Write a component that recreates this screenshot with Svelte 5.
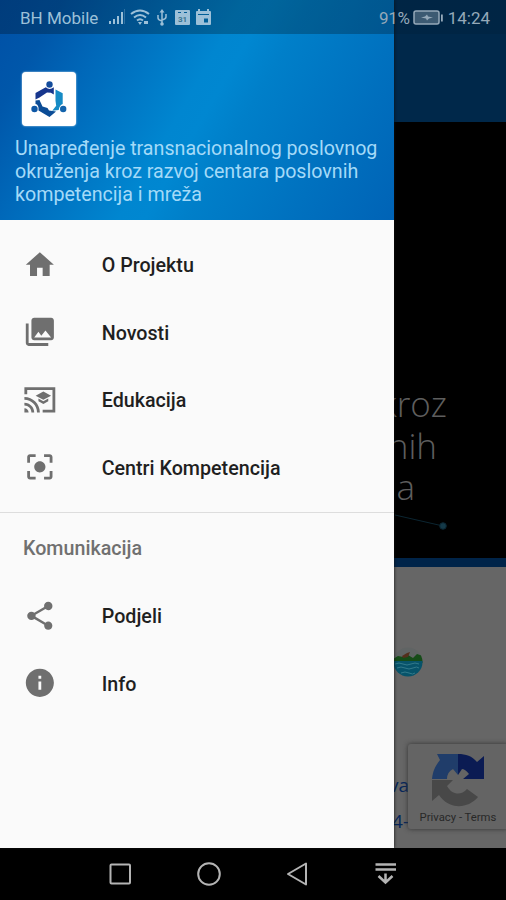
<script lang="ts">
  type Item = { label: string; icon: string };

  const home = 'M10 20v-6h4v6h5v-8h3L12 3 2 12h3v8z';
  const library =
    'M22 16V4c0-1.1-.9-2-2-2H8c-1.1 0-2 .9-2 2v12c0 1.1.9 2 2 2h12c1.1 0 2-.9 2-2zm-11-4l2.03 2.71L16 11l4 5H8l3-4zM2 6v14c0 1.1.9 2 2 2h14v-2H4V6H2z';
  const education =
    'M23 3H1v5h2V5h18v14h-7v2h9V3zM1 18v3h3c0-1.66-1.34-3-3-3zm0-4v2c2.76 0 5 2.24 5 5h2c0-3.87-3.13-7-7-7zm0-4v2c4.97 0 9 4.03 9 9h2c0-6.08-4.93-11-11-11zm10 1.09v2L14.5 15l3.5-1.91v-2L14.5 13 11 11.09zM14.5 6 9 9l5.5 3L20 9l-5.5-3z';
  const focus =
    'M12 8c-2.21 0-4 1.79-4 4s1.79 4 4 4 4-1.79 4-4-1.79-4-4-4zm-7 7H3v4c0 1.1.9 2 2 2h4v-2H5v-4zM5 5h4V3H5c-1.1 0-2 .9-2 2v4h2V5zm14-2h-4v2h4v4h2V5c0-1.1-.9-2-2-2zm0 16h-4v2h4c1.1 0 2-.9 2-2v-4h-2v4z';
  const share =
    'M18 16.08c-.76 0-1.44.3-1.96.77L8.91 12.7c.05-.23.09-.46.09-.7s-.04-.47-.09-.7l7.05-4.11c.54.5 1.25.81 2.04.81 1.66 0 3-1.34 3-3s-1.34-3-3-3-3 1.34-3 3c0 .24.04.47.09.7L8.04 9.81C7.5 9.31 6.79 9 6 9c-1.66 0-3 1.34-3 3s1.34 3 3 3c.79 0 1.5-.31 2.04-.81l7.12 4.16c-.05.21-.08.43-.08.65 0 1.61 1.31 2.92 2.92 2.92s2.92-1.31 2.92-2.92-1.31-2.92-2.92-2.92z';
  const info =
    'M12 2C6.48 2 2 6.48 2 12s4.48 10 10 10 10-4.48 10-10S17.52 2 12 2zm1 15h-2v-6h2v6zm0-8h-2V7h2v2z';

  const main: Item[] = [
    { label: 'O Projektu', icon: home },
    { label: 'Novosti', icon: library },
    { label: 'Edukacija', icon: education },
    { label: 'Centri Kompetencija', icon: focus }
  ];
  const communication: Item[] = [
    { label: 'Podjeli', icon: share },
    { label: 'Info', icon: info }
  ];
</script>

{#snippet row(item: Item)}
  <li>
    <svg class="icon" viewBox="0 0 24 24"><path d={item.icon} /></svg>
    <span>{item.label}</span>
  </li>
{/snippet}

<div class="phone">
  <div class="page">
    <div class="appbar"></div>
    <div class="hero">
      <p class="l1">kroz</p>
      <p class="l2">nih</p>
      <p class="l3">a</p>
      <svg class="spark" viewBox="0 0 60 24">
        <path d="M0 5 L48 16" />
        <circle cx="48" cy="16" r="3.3" />
      </svg>
    </div>
    <div class="content">
      <svg class="crest" viewBox="0 0 30 30">
        <clipPath id="crest"><circle cx="15" cy="15" r="14.5" /></clipPath>
        <g clip-path="url(#crest)">
          <rect width="30" height="30" fill="#606464" />
          <path d="M0 15V12l5-3 5 1 5-2 5 3 4-4 6 2v7z" fill="#164c18" />
          <path d="M9 9l5-3 3-1-2 5-5 1z" fill="#542f1c" />
          <rect y="14" width="30" height="16" fill="#07536a" />
          <path d="M2 17q4-2 8 0t8 0 8 0M4 21q4-2 8 0t8 0 6 0M8 26q4-2 8 0t6 0" stroke="#337a8b" fill="none" />
        </g>
      </svg>
      <span class="link va">va</span>
      <span class="link four">4-</span>
      <div class="captcha">
        <svg viewBox="0 0 54 54">
          <path d="M1 26C2 17 5 12 9 7L6 1h21v21l-5-6q-6 3-6 10z" fill="#203d6a" />
          <path d="M27 1c8 0 14 2 19 8l7-6v23H32l6-5q-4-5-7-5l-4 6z" fill="#0b1b53" />
          <path d="M1 27h21l-6 6c5 9 14 10 20 3l11 8C36 57 17 56 8 42l-7 6z" fill="#484848" />
        </svg>
        <span>Privacy - Terms</span>
      </div>
    </div>
  </div>

  <aside class="drawer">
    <header>
      <div class="logo">
        <svg viewBox="0 0 54 54">
          <circle cx="27.5" cy="12.5" r="3.2" fill="#144c9c" />
          <circle cx="12.5" cy="37" r="3.2" fill="#0e58a6" />
          <circle cx="41.2" cy="37" r="3.2" fill="#1263ac" />
          <path d="M13.500 21l10.300-5.800q3.700 3.600 8 0V22.500l-3-1.700-3.800-.3-7.500 5-4 2z" fill="#17368d" />
          <path d="M33.500 17.500l7.200 3.800V32q-3.200.8-4 6l-6.500.8 4-5-.7-5z" fill="#168bc5" />
          <path d="M13.500 28.500l4-.5 3 6.500 5 1.500 1.500 2.500 7 1-6.500 5.500-11-6.500q.5-6-3-6.500z" fill="#0b4c96" />
        </svg>
      </div>
      <p>Unapređenje transnacionalnog poslovnog okruženja kroz razvoj centara poslovnih kompetencija i mreža</p>
    </header>
    <ul class="main">
      {#each main as item (item.label)}
        {@render row(item)}
      {/each}
    </ul>
    <h2>Komunikacija</h2>
    <ul>
      {#each communication as item (item.label)}
        {@render row(item)}
      {/each}
    </ul>
  </aside>

  <div class="status">
    <span class="carrier">BH Mobile</span>
    <svg class="signals" viewBox="0 0 106 20">
      <path d="M0 13h2v3H0zM4 11h2v5H4zM8 8h2v8H8zM12 4h2v12h-2z" />
      <path d="M15 1h1v15h-1z" opacity=".3" />
      <g fill="none" stroke="currentColor" stroke-width="2">
        <path d="M22 6q9-7 18 0M25 9.500q6-5 12 0M28 12.500q3-2.500 6 0" />
        <path d="M53 3v13M49 7v3q0 2 4 3M57 6v3q0 2-4 3" stroke-width="1.5" />
      </g>
      <path d="M29 14h4l-2 3zM35 13h4v3h-4zM50.500 4.500L53 1l2.500 3.500z" />
      <circle cx="53" cy="16" r="1.8" />
      <path fill-rule="evenodd" d="M67 2h13q1 0 1 1v13q0 1-1 1H67q-1 0-1-1V3q0-1 1-1zM69 4h3v1h-3zM75 4h3v1h-3z" />
      <text x="69" y="13.500">31</text>
      <path fill-rule="evenodd" d="M88 3h1V1h2v2h7V1h2v2h1q1 0 1 1v12q0 1-1 1H88q-1 0-1-1V4q0-1 1-1zM89 6v1h11V6zM95 10.500v4h4v-4z" />
    </svg>
    <span class="percent">91%</span>
    <svg class="battery" viewBox="0 0 31 16">
      <rect x="1" y="1" width="25" height="13" rx="2" fill="currentColor" fill-opacity=".4" stroke="currentColor" stroke-width="1.5" />
      <path d="M28 4.500h1.800v7H28zM8 7.500l4-1 2-2 1 2 5 1-4 1-2 2-1-2z" />
    </svg>
    <span class="time">14:24</span>
  </div>

  <nav>
    <svg viewBox="0 0 28 28"><rect x="4.500" y="4.500" width="19.500" height="19" rx="1" /></svg>
    <svg viewBox="0 0 28 28"><circle cx="14" cy="14" r="10.800" /></svg>
    <svg viewBox="0 0 28 28"><path d="M23 3.500v21L5 14z" stroke-linejoin="round" /></svg>
    <svg viewBox="0 0 28 28"><path d="M3.500 4.500h20.500M3.500 9.500h20.500M13.500 13.500v9M6.500 16l7 6.500 7-6.500" stroke-width="2.500" /></svg>
  </nav>
</div>

<style>
  :global(body) {
    margin: 0;
    background: #000;
  }

  p,
  h2,
  ul {
    margin: 0;
    padding: 0;
  }

  svg {
    display: block;
    flex: none;
  }

  .phone {
    position: relative;
    display: flex;
    flex-direction: column;
    width: 506px;
    height: 900px;
    overflow: hidden;
    font-family: Roboto, sans-serif;
  }

  .page {
    display: flex;
    flex-direction: column;
    height: 848px;
  }

  .appbar {
    height: 122px;
    background: #00284a;
  }

  .hero {
    position: relative;
    box-sizing: border-box;
    height: 436px;
    padding-top: 261px;
    background: #000;
    color: #5e5e5e;
    font: 300 35px/41.500px 'Open Sans', sans-serif;
    text-align: right;
  }

  .l1 { padding-right: 59px; }
  .l2 { padding-right: 69px; }
  .l3 { padding-right: 91px; }

  .spark {
    position: absolute;
    left: 395px;
    top: 388px;
    width: 60px;
    stroke: #0b2531;
    fill: #143948;
  }

  .content {
    position: relative;
    flex: 1;
    border-top: 9px solid #002449;
    background: #666;
  }

  .crest {
    position: absolute;
    left: 393px;
    top: 80px;
    width: 30px;
  }

  .link {
    position: absolute;
    right: 97px;
    color: #06265a;
    font: 19px 'Open Sans', sans-serif;
  }

  .va { top: 205px; }
  .four { top: 241px; }

  .captcha {
    position: absolute;
    left: 408px;
    top: 177px;
    display: flex;
    flex-direction: column;
    align-items: center;
    width: 100px;
    height: 85px;
    border-radius: 3px;
    background: #646464;
    box-shadow: 0 0 5px #333;
    color: #282828;
    font-size: 11.300px;
  }

  .captcha svg {
    width: 54px;
    margin: 9px 0 4px;
  }

  .drawer {
    position: absolute;
    left: 0;
    top: 0;
    width: 394px;
    height: 848px;
    background: #fafafa;
    box-shadow: 0 0 3px #111;
  }

  header {
    box-sizing: border-box;
    height: 220px;
    padding: 72px 10px 0 15px;
    background: linear-gradient(120deg, #0050a6 0%, #0057aa 12%, #0068b9 24%, #0079c6 37%, #0086d0 47%, #0087d1 52%, #007fc9 60%, #0071bf 80%, #0063b6 100%);
    color: #a4daf8;
  }

  .logo {
    width: 54px;
    height: 54px;
    margin: 0 0 11px 6.500px;
    border-radius: 4px;
    background: #fff;
    box-shadow: 0 0 2px #dbeaf5;
  }

  header p {
    font-size: 19.650px;
    line-height: 23px;
  }

  ul {
    list-style: none;
  }

  .main {
    padding: 11px 0;
    border-bottom: 1px solid #ddd;
  }

  li {
    display: flex;
    align-items: center;
    height: 67.500px;
    padding-left: 23px;
    gap: 45px;
    color: #1f1f1f;
    font-size: 19.700px;
    font-weight: 500;
  }

  li span {
    padding-top: 2px;
  }

  .icon {
    width: 33.700px;
    fill: #6f6f6f;
  }

  h2 {
    padding: 2px 0 0 23px;
    color: #707070;
    font-size: 19.700px;
    font-weight: 500;
    line-height: 67px;
  }

  .status {
    position: absolute;
    inset: 0 0 auto;
    display: flex;
    align-items: center;
    height: 34px;
    box-sizing: border-box;
    padding: 2px 16px 0 20px;
    background: linear-gradient(90deg, rgba(0, 0, 0, 0.25) 394px, rgba(0, 0, 0, 0.08) 394px);
    color: #9cc0d8;
    font-size: 17px;
  }

  .status svg {
    fill: currentColor;
  }

  .signals {
    width: 106px;
    margin-left: 11px;
  }

  .signals text {
    fill: #397490;
    font-size: 8px;
    font-weight: 700;
  }

  .percent {
    margin-left: auto;
    letter-spacing: -0.3px;
  }

  .battery {
    width: 31px;
    margin: 0 4px 0 3px;
  }

  .percent,
  .battery,
  .time {
    color: #95a9b9;
  }

  nav {
    display: flex;
    align-items: center;
    justify-content: center;
    gap: 60.500px;
    height: 52px;
    background: #000;
  }

  nav svg {
    width: 28px;
    fill: none;
    stroke: #b4b4b4;
    stroke-width: 2;
  }
</style>
